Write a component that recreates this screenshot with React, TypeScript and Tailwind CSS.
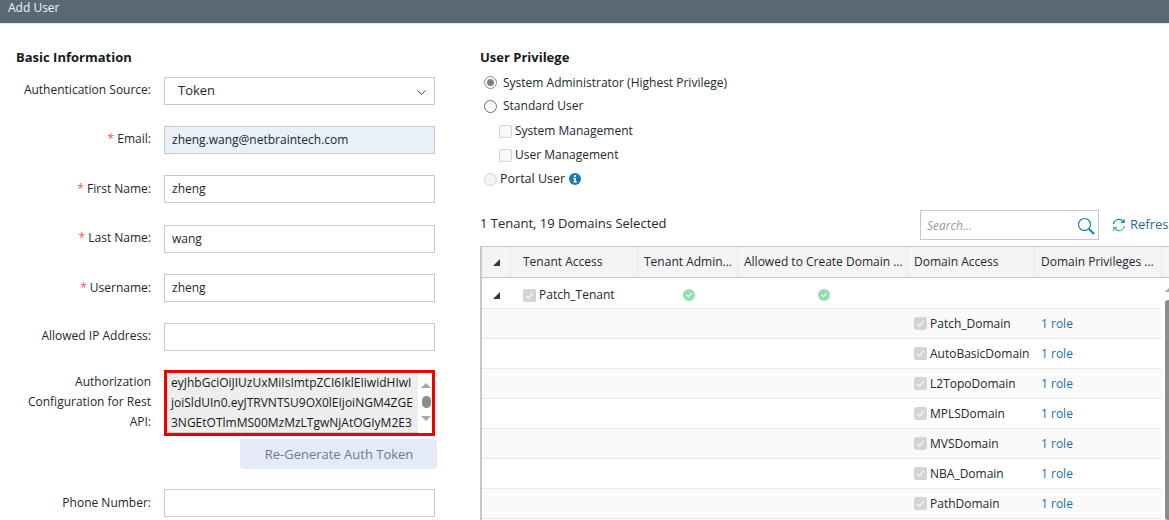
import React from 'react';
import { ChevronDown } from 'lucide-react';

const domains = ['Patch_Domain', 'AutoBasicDomain', 'L2TopoDomain', 'MPLSDomain', 'MVSDomain', 'NBA_Domain', 'PathDomain'];

function Label({ children, required, low }: { children: React.ReactNode; required?: boolean; low?: boolean }) {
  return (
    <div className={`w-[151px] shrink-0 text-right text-[12px] leading-[20px] text-[#22282e] ${low ? '' : 'pb-[2px]'}`}>
      {required && <span className="text-[#e8604c]">* </span>}
      {children}
    </div>
  );
}

function Field({ label, value, required, filled, low, className }: { label: string; value?: string; required?: boolean; filled?: boolean; low?: boolean; className?: string }) {
  return (
    <div className={`flex items-center gap-[13px] ${className ?? ''}`}>
      <Label required={required} low={low}>{label}:</Label>
      <div className={`flex h-[28px] w-[271px] items-center border border-[#c8c8c8] px-[7px] text-[12px] text-[#22282e] ${filled ? 'bg-[#e8f0fa]' : 'bg-white'}`}>
        {value}
      </div>
    </div>
  );
}

function Tick() {
  return (
    <span className="flex h-[13px] w-[13px] shrink-0 items-center justify-center rounded-[2px] bg-[#d4d4d4]">
      <svg viewBox="0 0 12 12" className="h-[11px] w-[11px]" fill="none" stroke="#f4f4f4" strokeWidth="1.6">
        <path d="M2.5 6.5 5 9l4.5-6" />
      </svg>
    </span>
  );
}

function GreenCheck() {
  return (
    <span className="flex h-[12px] w-[12px] items-center justify-center rounded-full bg-[#90e0b0]">
      <svg viewBox="0 0 12 12" className="h-[10px] w-[10px]" fill="none" stroke="#ffffff" strokeWidth="1.3">
        <path d="M3 6.2 5.2 8.2 9 4" />
      </svg>
    </span>
  );
}

function Corner() {
  return (
    <svg viewBox="0 0 7 7" className="h-[7px] w-[7px]">
      <path d="M7 0v7H0z" fill="#30363c" />
    </svg>
  );
}

function Radio({ checked, disabled }: { checked?: boolean; disabled?: boolean }) {
  return (
    <span className={`flex h-[13px] w-[13px] shrink-0 items-center justify-center rounded-full border ${disabled ? 'border-[#d0d0d0] bg-[#f4f4f4]' : checked ? 'border-[#8a8a8a] bg-white' : 'border-[#707070] bg-white'}`}>
      {checked && <span className="h-[7px] w-[7px] rounded-full bg-[#808080]" />}
    </span>
  );
}

function Check() {
  return <span className="h-[13px] w-[13px] shrink-0 rounded-[2px] border border-[#d4d4d4] bg-[#f7f7f7]" />;
}

function HeaderCell({ width, children }: { width: string; children?: React.ReactNode }) {
  return (
    <div className={`flex h-full shrink-0 items-center overflow-hidden border-r border-[#e8e8e8] whitespace-nowrap ${width}`}>
      {children}
    </div>
  );
}

export default function App() {
  return (
    <div className="h-[520px] w-[1169px] overflow-hidden bg-white text-[13px] text-[#22282e]" style={{ fontFamily: '"Open Sans", sans-serif' }}>
      <div className="h-[24px] border-b border-[#e4e8ec] bg-[#586874] pl-[8px] text-[12px] leading-[16px] text-[#f2f4f6]">Add User</div>

      <div className="flex">
        <div className="w-[480px] shrink-0">
          <h2 className="mt-[24px] pl-[16px] text-[13px] leading-[18px] font-bold text-[#15191d]">Basic Information</h2>

          <div className="mt-[11px] flex items-center gap-[13px]">
            <Label>Authentication Source:</Label>
            <div className="flex h-[28px] w-[271px] items-center justify-between border border-[#c8c8c8] pr-[5px] pl-[13px]">
              <span>Token</span>
              <ChevronDown size={15} strokeWidth={1.5} className="mt-[2px] text-[#30363c]" />
            </div>
          </div>

          <Field className="mt-[21px]" label="Email" value="zheng.wang@netbraintech.com" required filled />
          <Field className="mt-[21px]" label="First Name" value="zheng" required low />
          <Field className="mt-[22px]" label="Last Name" value="wang" required />
          <Field className="mt-[21px]" label="Username" value="zheng" required low />
          <Field className="mt-[21px]" label="Allowed IP Address" />

          <div className="mt-[19px] flex gap-[13px]">
            <div className="w-[151px] shrink-0 pt-[2px] text-right text-[12px] leading-[20px]">
              Authorization<br />Configuration for Rest<br />API:
            </div>
            <div className="flex h-[66px] w-[271px] overflow-hidden border-[3px] border-[#f00000] bg-[#eeeeee]">
              <div className="flex-1 overflow-hidden border-b border-[#cfcfcf] pl-[4px] text-[12px] leading-[20px] whitespace-nowrap text-[#15191d]">
                <div>eyJhbGciOiJIUzUxMiIsImtpZCI6IklEIiwidHIwI</div>
                <div>joiSldUIn0.eyJTRVNTSU9OX0lEIjoiNGM4ZGE</div>
                <div>3NGEtOTlmMS00MzMzLTgwNjAtOGIyM2E3</div>
              </div>
              <div className="flex w-[14px] shrink-0 flex-col items-center justify-between bg-white pt-[10px] pb-[12px] pl-[2px]">
                <span className="h-0 w-0 border-x-[5px] border-b-[5px] border-x-transparent border-b-[#a8a8a8]" />
                <span className="h-[12px] w-[9px] rounded-full bg-[#8c8c8c]" />
                <span className="h-0 w-0 border-x-[5px] border-t-[5px] border-x-transparent border-t-[#a8a8a8]" />
              </div>
            </div>
          </div>

          <div className="mt-[3px] ml-[240px] flex h-[30px] w-[197px] items-center justify-center rounded-[4px] bg-[#e4eaf6] pt-[1px] pl-[1px] text-[#6e7a86]">
            Re-Generate Auth Token
          </div>

          <Field className="mt-[20px]" label="Phone Number" low />
        </div>

        <div className="w-[689px] shrink-0">
          <h2 className="mt-[24px] text-[13px] leading-[18px] font-bold text-[#15191d]">User Privilege</h2>

          <div className="mt-[5px] text-[12px]">
            <div className="flex h-[23px] items-center gap-[6px] pl-[4px]"><Radio checked /><span>System Administrator (Highest Privilege)</span></div>
            <div className="flex h-[24px] items-center gap-[6px] pl-[4px]"><Radio /><span>Standard User</span></div>
            <div className="mt-[1px] flex h-[24px] items-center gap-[3px] pl-[19px]"><Check /><span>System Management</span></div>
            <div className="flex h-[24px] items-center gap-[3px] pl-[19px]"><Check /><span>User Management</span></div>
          </div>
          <div className="flex h-[24px] items-center gap-[3px] pl-[4px] text-[12.5px]">
            <Radio disabled /><span>Portal User</span>
            <svg viewBox="0 0 12 12" className="ml-[1px] h-[12px] w-[12px]">
              <circle cx="6" cy="6" r="6" fill="#1a7ab8" />
              <rect x="5" y="2.2" width="2" height="1.8" fill="#ffffff" />
              <path d="M4.2 5h2.8v3.6h1v1H4.2v-1h1V6h-1z" fill="#ffffff" />
            </svg>
          </div>

          <div className="mt-[17px] flex h-[34px] items-center">
            <span className="w-[440px] shrink-0 pb-[2px]">1 Tenant, 19 Domains Selected</span>
            <div className="flex h-[30px] w-[179px] shrink-0 items-center justify-between border border-[#c8c8c8] pr-[3px] pl-[6px]">
              <span className="pt-[1px] text-[12px] text-[#9a9a9a] italic">Search...</span>
              <svg viewBox="0 0 18 18" className="mt-[1px] h-[18px] w-[18px]" fill="none">
                <circle cx="7.5" cy="7.5" r="6" stroke="#1a7ab8" strokeWidth="1.2" />
                <path d="M12 12l5 5" stroke="#1a7ab8" strokeWidth="2" />
              </svg>
            </div>
            <svg viewBox="0 0 14 14" className="ml-[13px] h-[14px] w-[14px] shrink-0" fill="none" strokeWidth="1.2">
              <path d="M1.5 6A5.6 5.6 0 0 1 11.6 3.8" stroke="#1a7ab8" />
              <path d="M12.2 1.2v3.2H9" stroke="#1a7ab8" />
              <path d="M12.5 8A5.6 5.6 0 0 1 2.4 10.2" stroke="#3cb878" />
              <path d="M1.8 12.8V9.6H5" stroke="#3cb878" />
            </svg>
            <span className="ml-[4px] whitespace-nowrap text-[#1a6fa8]">Refresh</span>
          </div>

          <div className="mt-[4px] border-l-2 border-[#c8c8c8] text-[12px]">
            <div className="flex h-[32px] items-center border-y border-[#c8c8c8] bg-[#f4f4f4]">
              <div className="flex h-full w-[29px] shrink-0 items-center justify-center border-r border-[#e8e8e8]"><Corner /></div>
              <HeaderCell width="w-[127px] pl-[12px]">Tenant Access</HeaderCell>
              <HeaderCell width="w-[100px] pl-[6px]">Tenant Admin...</HeaderCell>
              <HeaderCell width="w-[170px] pl-[6px]">Allowed to Create Domain ...</HeaderCell>
              <HeaderCell width="w-[127px] pl-[6px]">Domain Access</HeaderCell>
              <HeaderCell width="w-[127px] pl-[6px]">Domain Privileges ...</HeaderCell>
            </div>

            <div className="flex">
              <div className="w-[680px] shrink-0">
                <div className="flex h-[31px] items-center border-b border-[#e8e8e8] pt-[4px]">
                  <div className="flex w-[29px] shrink-0 justify-center"><Corner /></div>
                  <div className="flex w-[127px] shrink-0 items-center gap-[3px] pl-[12px]"><Tick /><span>Patch_Tenant</span></div>
                  <div className="flex w-[100px] shrink-0 justify-center pl-[2px]"><GreenCheck /></div>
                  <div className="flex w-[170px] shrink-0 justify-center pl-[2px]"><GreenCheck /></div>
                </div>
                {domains.map((name, i) => (
                  <div key={name} className={`flex h-[30px] items-center border-b border-[#e8e8e8] ${i % 2 === 0 ? 'bg-[#fafafa]' : 'bg-white'}`}>
                    <div className="w-[426px] shrink-0" />
                    <div className="flex w-[127px] shrink-0 items-center gap-[3px] pl-[6px] whitespace-nowrap"><Tick /><span>{name}</span></div>
                    <span className="pl-[6px] text-[#1a6fa8]">1 role</span>
                  </div>
                ))}
                <div className="h-[30px] bg-[#fafafa]" />
              </div>
              <div className="flex flex-1 flex-col items-start pt-[10px] pl-[3px]">
                <span className="h-0 w-0 border-x-[4px] border-b-[4px] border-x-transparent border-b-[#a8a8a8]" />
                <span className="mt-[8px] h-[220px] w-[6px] rounded-[3px] bg-[#8c8c8c]" />
              </div>
            </div>
          </div>
        </div>
      </div>
    </div>
  );
}
